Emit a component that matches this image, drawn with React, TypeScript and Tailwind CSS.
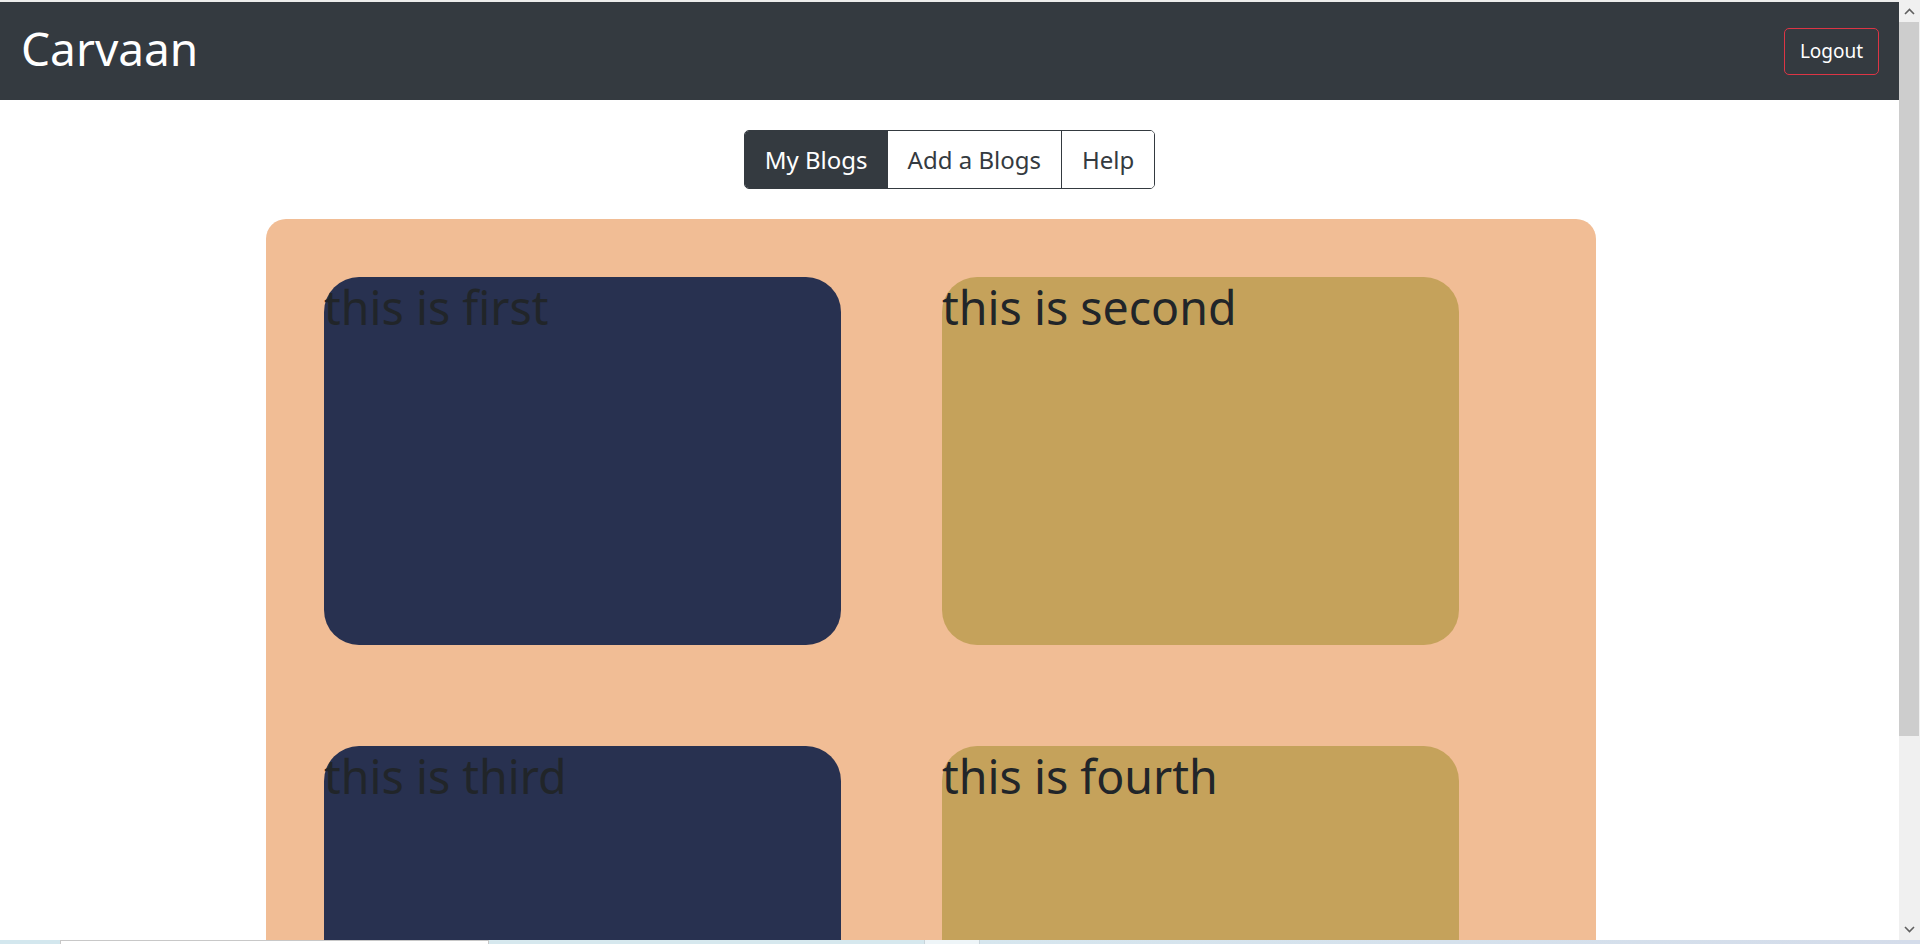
import React from "react";

const Card = ({ text, color }: { text: string; color: string }) => (
  <div className={`w-[517px] h-[368px] rounded-[35px] ${color}`}>
    <div className="text-[46.5px] leading-[61px] text-[#212529]">{text}</div>
  </div>
);

export default function App() {
  return (
    <div
      className="w-[1920px] h-[944px] overflow-hidden flex flex-col bg-white"
      style={{ fontFamily: '"Segoe UI", "Noto Sans", sans-serif' }}
    >
      <div className="flex flex-1 min-h-0">
        <div className="w-[1899px] flex flex-col overflow-hidden">
          <div className="h-[2px] bg-[#ececec] shrink-0" />
          <nav className="h-[98px] shrink-0 bg-[#343a40] flex items-center justify-between pl-[21px] pr-[20px]">
            <span className="text-[46px] leading-none text-white -mt-[6px]">Carvaan</span>
            <button className="h-[47px] w-[95px] text-[19px] leading-[1.5] text-white border border-[#dc3545] rounded-[5px]">
              Logout
            </button>
          </nav>
          <div className="flex justify-center pt-[30px] shrink-0">
            <div className="flex border border-[#343a40] rounded-[5px] overflow-hidden h-[59px] text-[24px] leading-[1.5]">
              <button className="px-[20px] bg-[#343a40] text-white">My Blogs</button>
              <button className="px-[20px] bg-white text-[#343a40]">Add a Blogs</button>
              <button className="px-[20px] bg-white text-[#343a40] border-l border-[#343a40]">Help</button>
            </div>
          </div>
          <div className="ml-[266px] mt-[30px] w-[1330px] flex-1 bg-[#f1bd95] rounded-t-[20px] pt-[58px] pl-[58px]">
            <div className="grid grid-cols-[517px_517px] gap-x-[101px] gap-y-[101px]">
              <Card text="this is first" color="bg-[#283150]" />
              <Card text="this is second" color="bg-[#c5a25b]" />
              <Card text="this is third" color="bg-[#283150]" />
              <Card text="this is fourth" color="bg-[#c5a25b]" />
            </div>
          </div>
        </div>
        <div className="w-[21px] bg-[#f0f0f0] flex flex-col items-stretch">
          <div className="h-[22px] flex items-center justify-center">
            <svg width="11" height="7" viewBox="0 0 11 7">
              <path d="M1 6 L5.5 1.5 L10 6" stroke="#606060" strokeWidth="1.6" fill="none" />
            </svg>
          </div>
          <div className="h-[714px] bg-[#cdcdcd] mr-[1px]" />
          <div className="flex-1" />
          <div className="h-[22px] flex items-center justify-center">
            <svg width="11" height="7" viewBox="0 0 11 7">
              <path d="M1 1 L5.5 5.5 L10 1" stroke="#606060" strokeWidth="1.6" fill="none" />
            </svg>
          </div>
        </div>
      </div>
      <div className="h-[4px] shrink-0 flex bg-[#d3e7ee]">
        <div className="w-[60px]" />
        <div className="w-[429px] bg-white border-t border-l border-r border-[#c8c8c8]" />
        <div className="w-[435px] bg-[#d6e8ee]" />
        <div className="w-[56px] bg-[#eef5f8] border-l border-r border-[#c8d4da]" />
        <div className="flex-1 bg-gradient-to-r from-[#d6e6ee] to-[#d4dcea]" />
      </div>
    </div>
  );
}
